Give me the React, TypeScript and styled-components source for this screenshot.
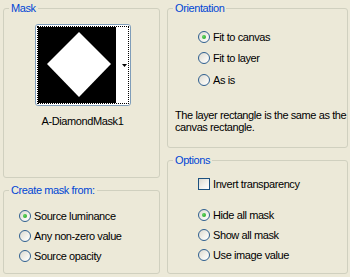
import styled, { createGlobalStyle } from 'styled-components';

const GlobalStyle = createGlobalStyle`
  html, body {
    margin: 0;
    padding: 0;
    background: #ece9d8;
  }
  body {
    font-family: "Liberation Sans", Arial, sans-serif;
    font-size: 11px;
    letter-spacing: -0.4px;
    color: #000;
  }
`;

const Dialog = styled.div`
  width: 350px;
  height: 277px;
  box-sizing: border-box;
  padding: 2px 2px 3px 3px;
  background: #ece9d8;
  display: flex;
  gap: 7px;
`;

const Column = styled.div<{ $width: number }>`
  width: ${(p) => p.$width}px;
  display: flex;
  flex-direction: column;
  gap: 6px;
`;

const Group = styled.fieldset<{ $height: number }>`
  margin: 0;
  padding: 0;
  height: ${(p) => p.$height}px;
  box-sizing: border-box;
  min-width: 0;
  border: 1px solid #d0d0bf;
  border-radius: 3px;
`;

const Legend = styled.legend`
  margin-left: 5px;
  padding: 0 2px;
  color: #0046d5;
  font-size: 11px;
  line-height: 13px;
`;

const GroupBody = styled.div<{ $pad: string }>`
  padding: ${(p) => p.$pad};
`;

const MaskBody = styled.div`
  display: flex;
  flex-direction: column;
  align-items: center;
`;

const Thumb = styled.div`
  width: 96px;
  height: 82px;
  box-sizing: border-box;
  border: 1px solid #7f9db9;
  border-radius: 3px;
  background: #fff;
  padding: 1px;
  margin-left: 2px;
`;

const ThumbFocus = styled.div`
  height: 100%;
  box-sizing: border-box;
  border: 1px dotted #000;
  display: flex;
`;

const ThumbImage = styled.div`
  width: 78px;
  background: #000;
  display: flex;
`;

const ThumbStrip = styled.div`
  flex: 1;
  background: #fff;
  display: flex;
  align-items: center;
  justify-content: flex-end;
  padding-right: 1px;
`;

const Caption = styled.div`
  margin-top: 9px;
  margin-left: 2px;
  line-height: 13px;
`;

const Option = styled.label<{ $h?: number }>`
  display: flex;
  align-items: center;
  height: ${(p) => p.$h ?? 20}px;
  gap: 3px;
  white-space: nowrap;
`;

const Radio = styled.span<{ $on?: boolean }>`
  width: 12px;
  height: 12px;
  box-sizing: border-box;
  border-radius: 50%;
  border: 1px solid #2f5f8f;
  background: linear-gradient(135deg, #dcd9cf 0%, #f4f3ee 60%, #fff 100%);
  display: flex;
  align-items: center;
  justify-content: center;
  flex: none;

  &::after {
    content: '';
    display: ${(p) => (p.$on ? 'block' : 'none')};
    width: 4px;
    height: 4px;
    border-radius: 50%;
    background: radial-gradient(circle at 35% 35%, #5ed35e, #21a121);
  }
`;

const Check = styled.span`
  width: 12px;
  height: 12px;
  box-sizing: border-box;
  border: 1px solid #1c5180;
  background: linear-gradient(135deg, #dcd9cf 0%, #f4f3ee 60%, #fff 100%);
  flex: none;
`;

const Note = styled.p`
  margin: 18px 0 0 -23px;
  line-height: 12px;
  white-space: nowrap;
`;

const Spacer = styled.div<{ $h: number }>`
  height: ${(p) => p.$h}px;
`;

function DiamondThumb() {
  return (
    <Thumb>
      <ThumbFocus>
        <ThumbImage>
          <svg width="78" height="76" viewBox="0 0 78 76">
            <defs>
              <filter id="soft">
                <feGaussianBlur stdDeviation="0.6" />
              </filter>
            </defs>
            <polygon points="9,37 41,5 73,37 41,70" fill="#fff" filter="url(#soft)" />
          </svg>
        </ThumbImage>
        <ThumbStrip>
          <svg width="5" height="3" viewBox="0 0 5 3">
            <polygon points="0,0 5,0 2.5,3" fill="#000" />
          </svg>
        </ThumbStrip>
      </ThumbFocus>
    </Thumb>
  );
}

export default function App() {
  return (
    <>
      <GlobalStyle />
      <Dialog>
        <Column $width={157}>
          <Group $height={176}>
            <Legend>Mask</Legend>
            <GroupBody $pad="9px 0 0 0">
              <MaskBody>
                <DiamondThumb />
                <Caption>A-DiamondMask1</Caption>
              </MaskBody>
            </GroupBody>
          </Group>
          <Group $height={90}>
            <Legend>Create mask from:</Legend>
            <GroupBody $pad="9px 0 0 15px">
              <Option>
                <Radio $on />
                Source luminance
              </Option>
              <Option>
                <Radio />
                Any non-zero value
              </Option>
              <Option>
                <Radio />
                Source opacity
              </Option>
            </GroupBody>
          </Group>
        </Column>
        <Column $width={181}>
          <Group $height={146}>
            <Legend>Orientation</Legend>
            <GroupBody $pad="11px 0 0 30px">
              <Option $h={21.5}>
                <Radio $on />
                Fit to canvas
              </Option>
              <Option $h={21.5}>
                <Radio />
                Fit to layer
              </Option>
              <Option $h={21.5}>
                <Radio />
                As is
              </Option>
              <Note>
                The layer rectangle is the same as the
                <br />
                canvas rectangle.
              </Note>
            </GroupBody>
          </Group>
          <Group $height={120}>
            <Legend>Options</Legend>
            <GroupBody $pad="7px 0 0 30px">
              <Option>
                <Check />
                Invert transparency
              </Option>
              <Spacer $h={11} />
              <Option>
                <Radio $on />
                Hide all mask
              </Option>
              <Option>
                <Radio />
                Show all mask
              </Option>
              <Option>
                <Radio />
                Use image value
              </Option>
            </GroupBody>
          </Group>
        </Column>
      </Dialog>
    </>
  );
}
